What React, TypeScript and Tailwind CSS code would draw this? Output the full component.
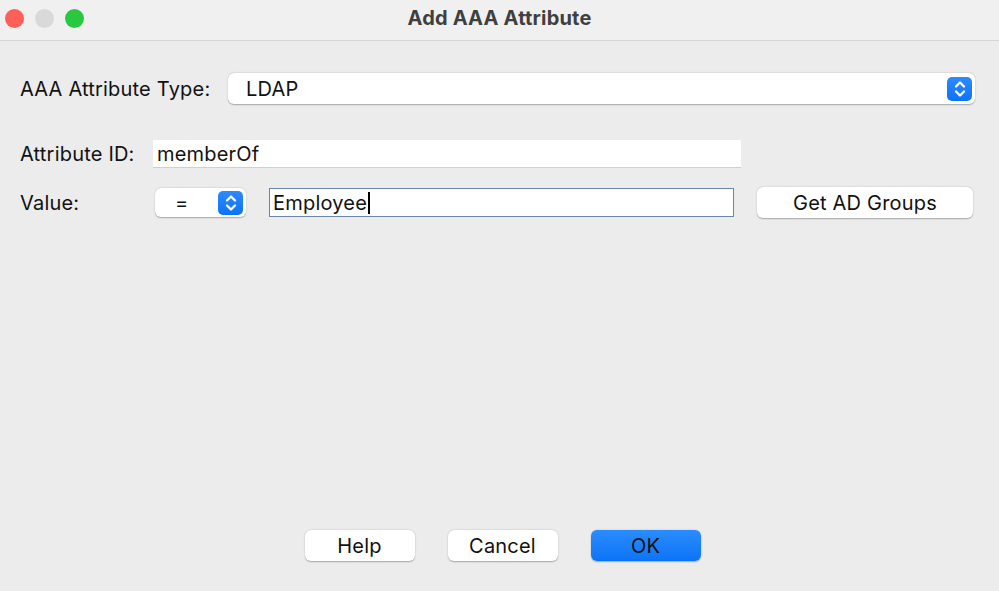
import React from "react";

function Stepper() {
  return (
    <div className="flex h-[24px] w-[25px] items-center justify-center rounded-[5px] bg-gradient-to-b from-[#2b8bff] to-[#0a73f5]">
      <svg width="14" height="20" viewBox="0 0 14 20" fill="none" stroke="white" strokeWidth="2.3" strokeLinecap="round" strokeLinejoin="round">
        <path d="M3 7.5 L7 3.5 L11 7.5" />
        <path d="M3 12.5 L7 16.5 L11 12.5" />
      </svg>
    </div>
  );
}

const font = "font-['Inter','Noto_Sans',sans-serif]";

export default function App() {
  return (
    <div className={`flex h-[591px] w-[999px] flex-col bg-[#ececec] text-[#111111] tracking-[0.2px] ${font}`}>
      <div className="grid h-[41px] grid-cols-[1fr_auto_1fr] items-center border-b border-[#d6d6d6] bg-[#f0f0f0]">
        <div className="flex items-center gap-[11px] pl-[5px] pb-[4px]">
          <span className="h-[19px] w-[19px] rounded-full bg-[#fe5f57]" />
          <span className="h-[19px] w-[19px] rounded-full bg-[#d9d9d9]" />
          <span className="h-[19px] w-[19px] rounded-full bg-[#2ac840]" />
        </div>
        <div className="pb-[5px] text-[20px] font-bold text-[#3f3f3f]">Add AAA Attribute</div>
        <div />
      </div>

      <div className="flex flex-1 flex-col pl-[20px] pr-[24px]">
        <div className="mt-[32px] flex h-[31px] items-center">
          <div className="w-[208px] text-[20px]">AAA Attribute Type:</div>
          <div className="flex h-[31px] flex-1 items-center justify-between rounded-[6px] bg-white pl-[18px] pr-[3px] shadow-[0_0.5px_1.5px_rgba(0,0,0,0.3)]">
            <span className="text-[20px]">LDAP</span>
            <Stepper />
          </div>
        </div>

        <div className="mt-[36px] flex h-[28px] items-center">
          <div className="w-[133px] text-[20px]">Attribute ID:</div>
          <div className="flex h-[28px] w-[588px] items-center border-b border-[#d0d0d0] bg-white pl-[4px] text-[20px]">
            memberOf
          </div>
        </div>

        <div className="mt-[19px] flex h-[31px] items-center">
          <div className="w-[135px] text-[20px]">Value:</div>
          <div className="flex h-[29px] w-[91px] items-center justify-between rounded-[6px] bg-white pl-[20px] pr-[3px] shadow-[0_0.5px_1.5px_rgba(0,0,0,0.3)]">
            <span className="text-[20px]">=</span>
            <Stepper />
          </div>
          <div className="ml-[23px] flex h-[29px] w-[465px] items-center border border-[#6a86a6] bg-white pl-[3px] text-[20px]">
            <span>Employee</span>
            <span className="ml-[1px] h-[22px] w-[1.5px] bg-black" />
          </div>
          <div className="ml-[23px] flex h-[31px] w-[216px] items-center justify-center rounded-[6px] bg-white text-[20px] shadow-[0_0.5px_1.5px_rgba(0,0,0,0.3)]">
            Get AD Groups
          </div>
        </div>

        <div className="mt-auto mb-[30px] flex items-center justify-center gap-[33px] pl-[10px]">
          <div className="flex h-[31px] w-[110px] items-center justify-center rounded-[6px] bg-white text-[20px] shadow-[0_0.5px_1.5px_rgba(0,0,0,0.3)]">
            Help
          </div>
          <div className="flex h-[31px] w-[110px] items-center justify-center rounded-[6px] bg-white text-[20px] shadow-[0_0.5px_1.5px_rgba(0,0,0,0.3)]">
            Cancel
          </div>
          <div className="flex h-[31px] w-[110px] items-center justify-center rounded-[6px] bg-gradient-to-b from-[#2a8cff] to-[#0a74f6] text-[20px] shadow-[0_0.5px_1.5px_rgba(0,0,0,0.3)]">
            OK
          </div>
        </div>
      </div>
    </div>
  );
}
